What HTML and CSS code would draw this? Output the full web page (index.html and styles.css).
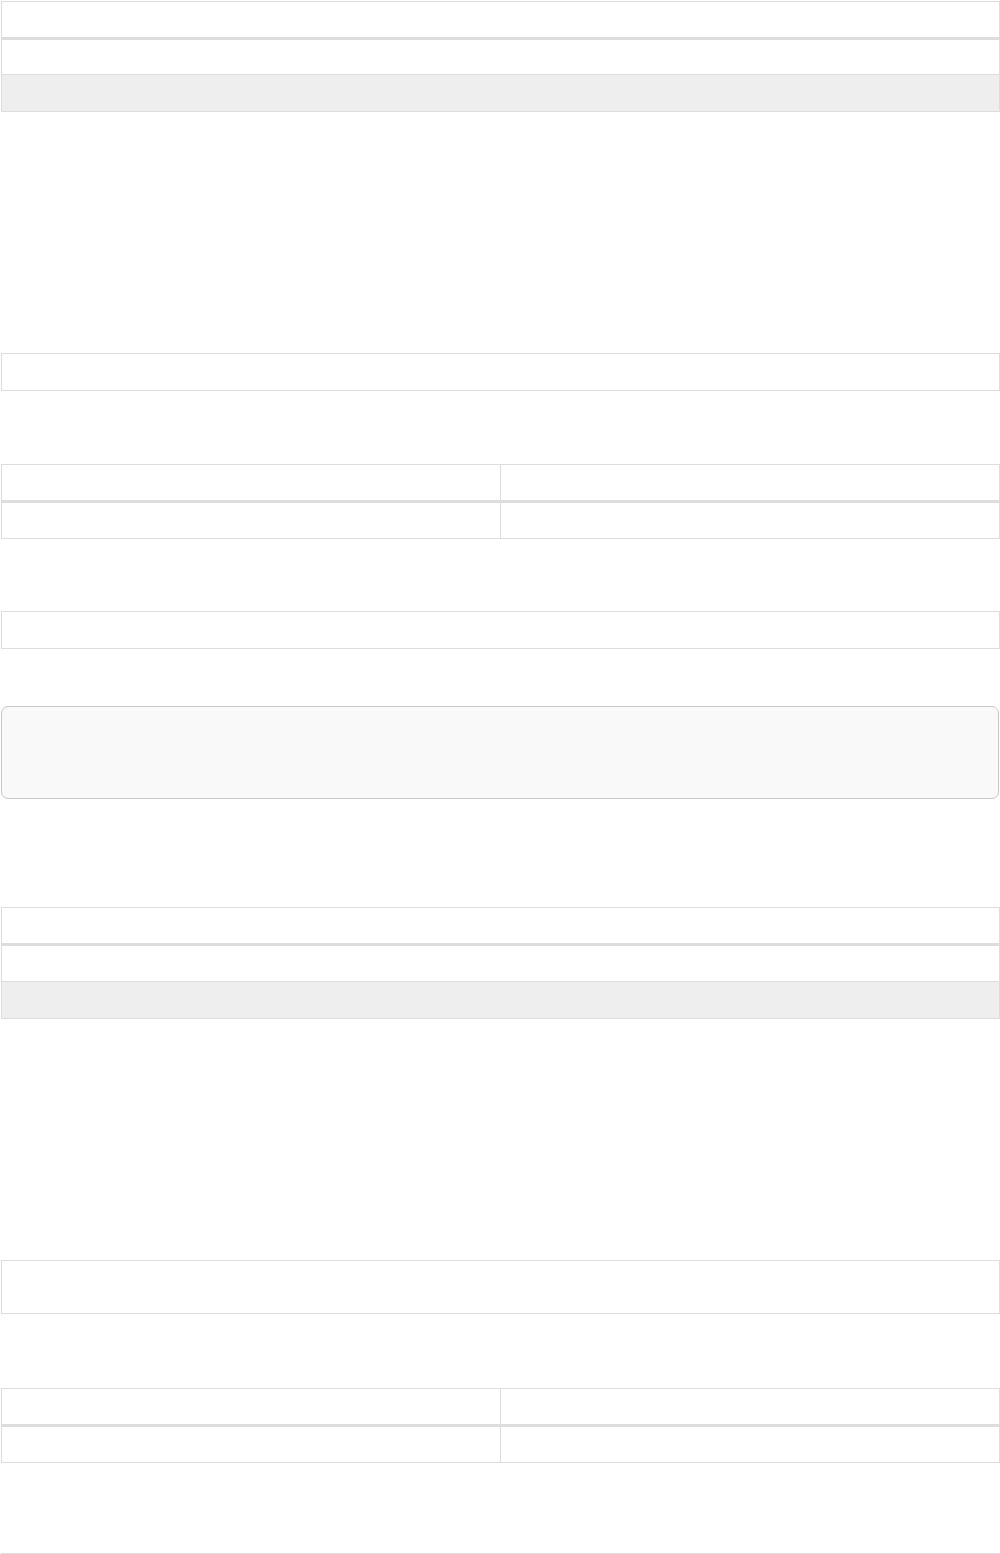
FILE: index.html
```html
<!DOCTYPE html>
<html>
<head>
<meta charset="utf-8">
<link rel="stylesheet" href="styles.css">
</head>
<body>
<div class="page">
  <div class="tbl t1">
    <div class="row head h35"></div>
    <div class="row line h34"></div>
    <div class="row shade h36"></div>
  </div>

  <div class="box b1"></div>

  <div class="tbl t2">
    <div class="row head split h35"><div class="cell"></div><div class="cell"></div></div>
    <div class="row split h35"><div class="cell"></div><div class="cell"></div></div>
  </div>

  <div class="box b2"></div>

  <div class="well"></div>

  <div class="tbl t4">
    <div class="row head h35"></div>
    <div class="row line h35"></div>
    <div class="row shade h36"></div>
  </div>

  <div class="box b3"></div>

  <div class="tbl t6">
    <div class="row head split h35"><div class="cell"></div><div class="cell"></div></div>
    <div class="row split h35"><div class="cell"></div><div class="cell"></div></div>
  </div>

  <div class="tbl t7"></div>
</div>
</body>
</html>
```

FILE: styles.css
```css
html, body {
  margin: 0;
  padding: 0;
  background: #ffffff;
  font-family: "Liberation Sans", Arial, sans-serif;
}
.page {
  padding: 1px 0 0 1px;
  display: flex;
  flex-direction: column;
  height: 1553px;
  overflow: hidden;
}
.tbl {
  width: 999px;
  box-sizing: border-box;
  border: 1px solid #dddddd;
  flex: none;
}
.row {
  box-sizing: border-box;
}
.head {
  border-bottom: 3px solid #dddddd;
}
.line {
  border-bottom: 1px solid #dddddd;
}
.shade {
  background: #eeeeee;
}
.h34 { height: 34px; }
.h35 { height: 35px; }
.h36 { height: 36px; }
.head.h35 { height: 38px; }
.line.h34 { height: 35px; }
.line.h35 { height: 36px; }
.split {
  display: grid;
  grid-template-columns: 499px 1fr;
}
.cell {
  box-sizing: border-box;
}
.split .cell:first-child {
  border-right: 1px solid #dddddd;
}
.box {
  width: 999px;
  box-sizing: border-box;
  border: 1px solid #dddddd;
  flex: none;
}
.b1 { height: 38px; margin-top: 241px; }
.t2 { margin-top: 73px; }
.b2 { height: 38px; margin-top: 72px; }
.well {
  width: 998px;
  height: 93px;
  box-sizing: border-box;
  margin-top: 57px;
  background: #f9f9f9;
  border: 1px solid #c8c8c8;
  border-radius: 7px;
  flex: none;
}
.t4 { margin-top: 108px; }
.b3 { height: 54px; margin-top: 241px; }
.t6 { margin-top: 74px; }
.t7 { margin-top: 90px; height: 40px; }
```
